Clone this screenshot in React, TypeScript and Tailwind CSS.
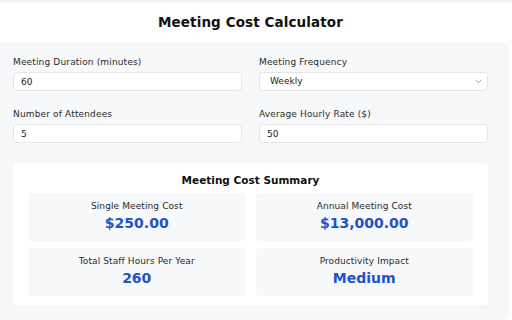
import { FC } from "react";

type FieldProps = {
  label: string;
  value: string;
  select?: boolean;
};

const Field: FC<FieldProps> = ({ label, value, select }) => (
  <div className="flex flex-col">
    <label className="h-[11px] text-[9px] leading-[11px] tracking-[0.15px] text-[#2b2b2b] mb-[4px]">
      {label}
    </label>
    {select ? (
      <div className="h-[19px] flex items-center justify-between bg-white border border-[#e4e6ea] rounded-[3px] pl-[10px] pr-[5px]">
        <span className="text-[9px] leading-[11px] text-[#222]">{value}</span>
        <svg width="7" height="5" viewBox="0 0 7 5" fill="none">
          <path d="M0.8 1l2.7 2.6L6.2 1" stroke="#8a8d93" strokeWidth="0.9" />
        </svg>
      </div>
    ) : (
      <input
        readOnly
        value={value}
        className="h-[19px] bg-white border border-[#e4e6ea] rounded-[3px] px-[7px] text-[9px] leading-[11px] text-[#222] outline-none"
      />
    )}
  </div>
);

type StatProps = {
  label: string;
  value: string;
};

const Stat: FC<StatProps> = ({ label, value }) => (
  <div className="h-[48px] bg-[#f7f8fa] rounded-[3px] flex flex-col items-center pt-[8px]">
    <span className="text-[9px] leading-[11px] tracking-[0.1px] text-[#2b2b2b]">{label}</span>
    <span className="mt-[3px] text-[14px] leading-[17px] font-bold text-[#2152c6]">
      {value}
    </span>
  </div>
);

export default function App() {
  return (
    <div
      className="w-[512px] h-[320px] bg-white overflow-hidden"
      style={{ fontFamily: '"DejaVu Sans", Verdana, sans-serif' }}
    >
      {/* top shadow strip */}
      <div className="h-[3px] bg-gradient-to-b from-[#eceef1] to-[#f8f9fa]" />

      <div className="w-[517px] -ml-[8px]">
        {/* Header */}
        <div className="h-[39px] flex items-center justify-center">
          <h1 className="text-[13.5px] leading-[17px] font-bold tracking-[0.1px] text-[#111]">
            Meeting Cost Calculator
          </h1>
        </div>

        {/* Panel */}
        <div className="h-[276px] bg-[#f7f8fa] rounded-[6px] shadow-[0_1px_2px_rgba(0,0,0,0.06)] px-[21px] pt-[15px]">
          <div className="grid grid-cols-2 gap-x-[17px] gap-y-[18px]">
            <Field label="Meeting Duration (minutes)" value="60" />
            <Field label="Meeting Frequency" value="Weekly" select />
            <Field label="Number of Attendees" value="5" />
            <Field label="Average Hourly Rate ($)" value="50" />
          </div>

          {/* Summary */}
          <div className="mt-[20px] h-[143px] bg-white rounded-[4px] shadow-[0_1px_2px_rgba(0,0,0,0.05)] px-[15.5px] pt-[11px]">
            <h2 className="text-center text-[10.5px] leading-[13px] font-bold text-[#111] mb-[6px]">
              Meeting Cost Summary
            </h2>
            <div className="grid grid-cols-2 gap-x-[11px] gap-y-[7px]">
              <Stat label="Single Meeting Cost" value="$250.00" />
              <Stat label="Annual Meeting Cost" value="$13,000.00" />
              <Stat label="Total Staff Hours Per Year" value="260" />
              <Stat label="Productivity Impact" value="Medium" />
            </div>
          </div>
        </div>
      </div>
    </div>
  );
}
